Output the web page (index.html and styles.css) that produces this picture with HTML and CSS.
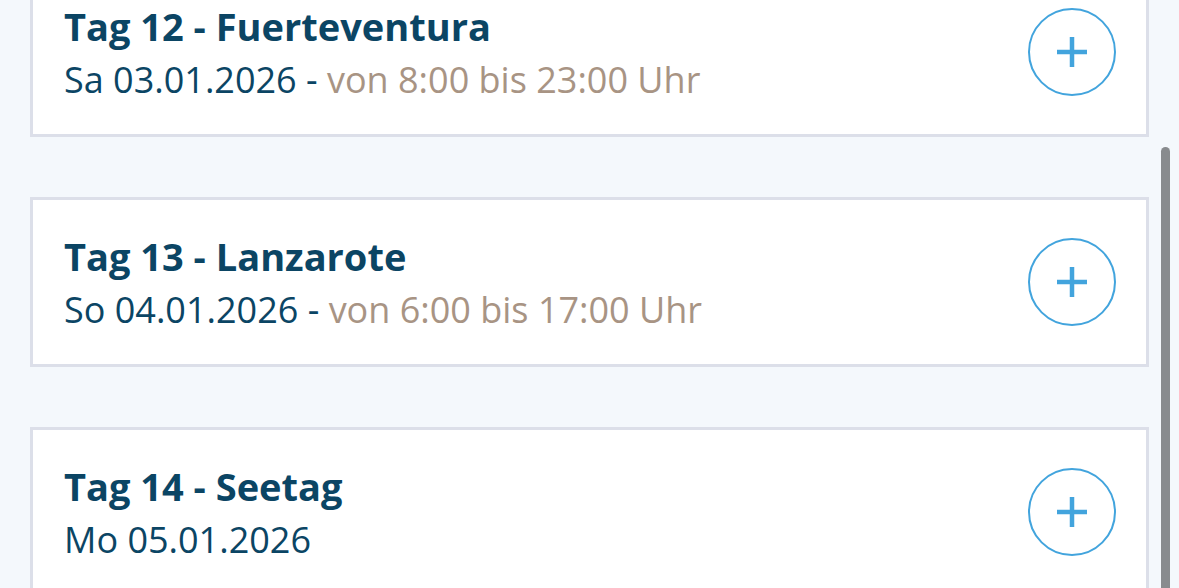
FILE: index.html
```html
<!DOCTYPE html>
<html lang="de">
<head>
<meta charset="utf-8">
<link rel="stylesheet" href="styles.css">
</head>
<body>
<div class="page">
  <div class="list">
    <div class="card">
      <div class="info">
        <div class="title">Tag 12 - Fuerteventura</div>
        <div class="sub">Sa 03.01.2026 - <span class="time">von 8:00 bis 23:00 Uhr</span></div>
      </div>
      <button class="add" aria-label="Hinzufügen">
        <svg viewBox="0 0 88 88" width="88" height="88"><circle cx="44" cy="44" r="43" fill="none" stroke="#42a4dd" stroke-width="2"/><path d="M29 44H59M44 29V59" stroke="#42a4dd" stroke-width="4.5" fill="none"/></svg>
      </button>
    </div>
    <div class="card">
      <div class="info">
        <div class="title">Tag 13 - Lanzarote</div>
        <div class="sub">So 04.01.2026 - <span class="time">von 6:00 bis 17:00 Uhr</span></div>
      </div>
      <button class="add" aria-label="Hinzufügen">
        <svg viewBox="0 0 88 88" width="88" height="88"><circle cx="44" cy="44" r="43" fill="none" stroke="#42a4dd" stroke-width="2"/><path d="M29 44H59M44 29V59" stroke="#42a4dd" stroke-width="4.5" fill="none"/></svg>
      </button>
    </div>
    <div class="card">
      <div class="info">
        <div class="title">Tag 14 - Seetag</div>
        <div class="sub">Mo 05.01.2026</div>
      </div>
      <button class="add" aria-label="Hinzufügen">
        <svg viewBox="0 0 88 88" width="88" height="88"><circle cx="44" cy="44" r="43" fill="none" stroke="#42a4dd" stroke-width="2"/><path d="M29 44H59M44 29V59" stroke="#42a4dd" stroke-width="4.5" fill="none"/></svg>
      </button>
    </div>
  </div>
  <div class="scrollbar"></div>
</div>
</body>
</html>
```
FILE: styles.css
```css
html, body {
  margin: 0;
  padding: 0;
  height: 100%;
  overflow: hidden;
  background: #f4f8fc;
}
.page {
  position: relative;
  height: 588px;
  overflow: hidden;
  padding: 0 30px;
  font-family: "Open Sans", "Noto Sans", sans-serif;
}
.list {
  display: flex;
  flex-direction: column;
  gap: 60px;
  margin-top: -33px;
}
.card {
  box-sizing: border-box;
  height: 170px;
  background: #fff;
  border: 3px solid #dcdfe9;
  display: flex;
  align-items: center;
  justify-content: space-between;
  padding: 0 30px 0 31px;
}
.info {
  display: flex;
  flex-direction: column;
  padding-top: 2px;
}
.title {
  font-weight: 700;
  font-size: 38px;
  line-height: 52px;
  color: #0b4564;
}
.sub {
  margin-top: 2px;
  font-size: 36px;
  line-height: 52px;
  color: #0b4564;
}
.time {
  color: #a89484;
}
.add {
  width: 88px;
  height: 88px;
  padding: 0;
  border: 0;
  background: none;
  display: block;
}
.add svg {
  display: block;
}
.scrollbar {
  position: absolute;
  left: 1161px;
  top: 147px;
  width: 9px;
  height: 460px;
  background: #888b8e;
  border-radius: 5px;
}
```
